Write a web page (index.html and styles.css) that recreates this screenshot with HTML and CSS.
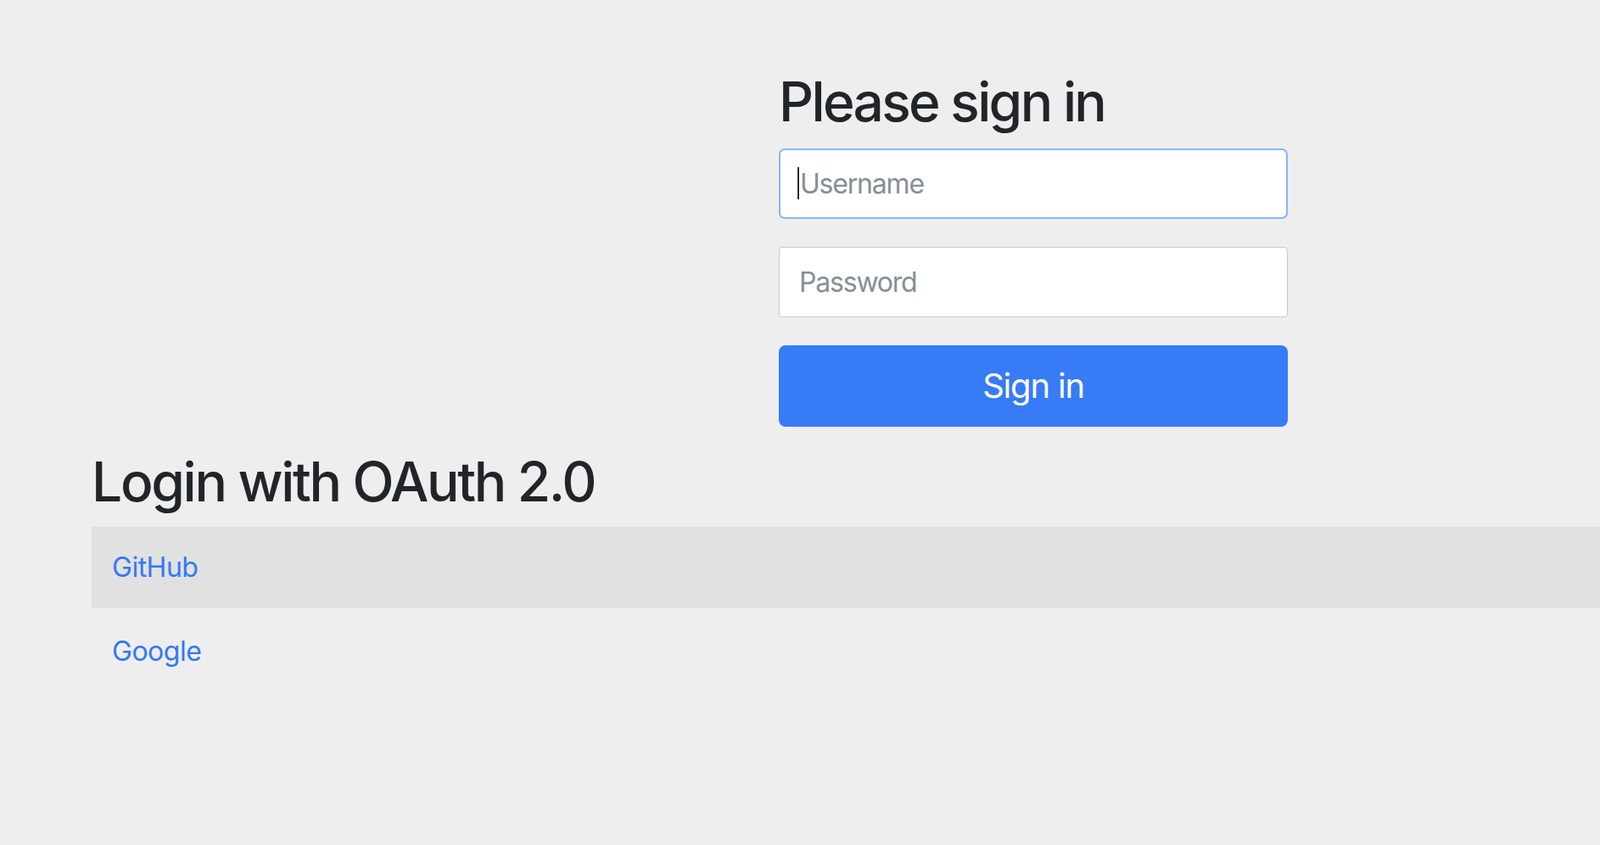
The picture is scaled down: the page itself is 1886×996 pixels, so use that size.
FILE: index.html
```html
<!DOCTYPE html>
<html lang="en">
<head>
<meta charset="utf-8">
<title>Please sign in</title>
<link rel="stylesheet" href="styles.css">
</head>
<body>
<div class="container">
  <form class="form-signin" method="post" action="#">
    <h2 class="form-signin-heading">Please sign in</h2>
    <p class="field">
      <span class="input-wrap">
        <input type="text" id="username" name="username" class="form-control is-focused" placeholder="Username" aria-label="Username">
        <span class="caret"></span>
      </span>
    </p>
    <p class="field">
      <input type="password" id="password" name="password" class="form-control" placeholder="Password" aria-label="Password">
    </p>
    <button class="btn-primary" type="submit">Sign in</button>
  </form>
  <h2 class="oauth-heading">Login with OAuth 2.0</h2>
  <table class="table">
    <tr class="stripe"><td><a href="#">GitHub</a></td></tr>
    <tr><td><a href="#">Google</a></td></tr>
  </table>
</div>
</body>
</html>
```
FILE: styles.css
```css
html, body {
  margin: 0;
  padding: 0;
}
body {
  background: #eeeeee;
  color: #212529;
  font-family: Inter, "Liberation Sans", sans-serif;
  font-size: 32px;
  line-height: 1.5;
  overflow: hidden;
}
.container {
  padding: 82px 0 0 108px;
}
.form-signin {
  width: 600px;
  margin: 0 0 27px 810px;
}
h2 {
  font-size: 64px;
  font-weight: 500;
  line-height: 76.8px;
  margin: 0 0 16px 0;
  letter-spacing: -2.65px;
}
.oauth-heading {
  letter-spacing: -2.3px;
  margin-bottom: 14px;
}
.field {
  margin: 0 0 33px 0;
}
.input-wrap {
  position: relative;
  display: block;
}
.form-control {
  display: block;
  box-sizing: border-box;
  width: 600px;
  height: 83px;
  padding: 15px 23px;
  font-family: inherit;
  font-size: 32px;
  line-height: 48px;
  letter-spacing: -1.2px;
  color: #495057;
  background: #ffffff;
  border: 1.5px solid #c9c9c9;
  border-radius: 4px;
  outline: none;
}
.form-control::placeholder {
  color: #868e96;
  opacity: 1;
}
.form-control.is-focused {
  border: 2px solid #86b6f6;
  border-radius: 7px;
}
.caret {
  position: absolute;
  left: 22px;
  top: 22px;
  width: 2px;
  height: 38px;
  background: #2b2b2b;
}
.btn-primary {
  display: block;
  box-sizing: border-box;
  width: 600px;
  height: 96px;
  border: none;
  border-radius: 8px;
  background: #377bf6;
  color: #ffffff;
  font-family: inherit;
  font-size: 40px;
  line-height: 1.5;
  letter-spacing: -1.2px;
  cursor: pointer;
}
.table {
  width: 100%;
  border-collapse: collapse;
  border-spacing: 0;
}
.table td {
  padding: 0 24px;
  height: 96px;
  vertical-align: middle;
}
.table tr:last-child td {
  padding-top: 3px;
}
.stripe {
  background: #e1e1e1;
}
a {
  color: #3478f6;
  text-decoration: none;
  letter-spacing: -0.5px;
}
```
